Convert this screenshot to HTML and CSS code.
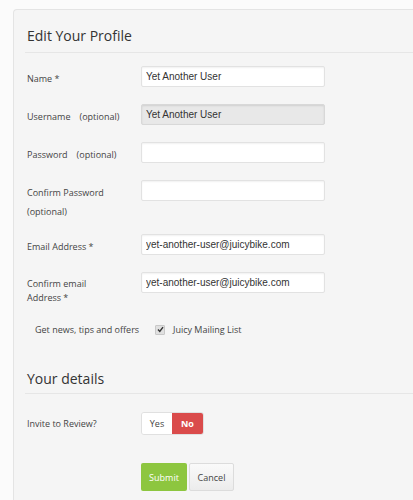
FILE: index.html
```html
<!DOCTYPE html>
<html lang="en">
<head>
    <meta charset="UTF-8">
    <meta name="viewport" content="width=device-width, initial-scale=1.0">
    <title>Edit Your Profile</title>
    <link rel="stylesheet" href="styles.css">
</head>
<body>

<div class="panel">
    <h2 class="section-title">Edit Your Profile</h2>

    <form class="profile-form">
        <div class="row">
            <label class="field-label">Name *</label>
            <input class="field" type="text" value="Yet Another User">
        </div>

        <div class="row">
            <label class="field-label">Username<span class="opt">(optional)</span></label>
            <input class="field readonly" type="text" value="Yet Another User" readonly>
        </div>

        <div class="row">
            <label class="field-label">Password<span class="opt">(optional)</span></label>
            <input class="field" type="password">
        </div>

        <div class="row row-tight">
            <label class="field-label">Confirm Password<br>(optional)</label>
            <input class="field" type="password">
        </div>

        <div class="row">
            <label class="field-label">Email Address *</label>
            <input class="field" type="text" value="yet-another-user@juicybike.com">
        </div>

        <div class="row row-compact">
            <label class="field-label narrow">Confirm email<br>Address *</label>
            <input class="field" type="text" value="yet-another-user@juicybike.com">
        </div>

        <div class="check-row">
            <span class="check-label">Get news, tips and offers</span>
            <span class="checkbox">
                <svg width="7" height="7" viewBox="0 0 7 7"><path d="M1 3.6 L2.8 5.4 L6 1.2" fill="none" stroke="#333" stroke-width="1.4"/></svg>
            </span>
            <span class="check-text">Juicy Mailing List</span>
        </div>

        <h2 class="section-title second">Your details</h2>

        <div class="row invite-row">
            <label class="field-label">Invite to Review?</label>
            <div class="toggle">
                <span class="toggle-yes">Yes</span>
                <span class="toggle-no">No</span>
            </div>
        </div>

        <div class="actions">
            <button type="submit" class="btn-submit">Submit</button>
            <button type="button" class="btn-cancel">Cancel</button>
        </div>
    </form>
</div>

</body>
</html>
```

FILE: styles.css
```css
/* Page */
body {
    margin: 0;
    padding: 9px 0 0 13px;
    background: #fbfbfb;
    font-family: 'Open Sans', sans-serif;
    color: #444;
    overflow: hidden;
}

.panel {
    width: 410px;
    min-height: 520px;
    background: #f5f5f5;
    border: 1px solid #e4e4e4;
    border-right: none;
    border-radius: 4px 0 0 4px;
    padding: 16px 0 0 11px;
    box-sizing: border-box;
}

.section-title {
    margin: 0;
    padding: 0 0 6px 2px;
    font-size: 14px;
    line-height: 20px;
    font-weight: normal;
    color: #333;
    border-bottom: 1px solid #e6e6e6;
}

.section-title.second {
    margin-top: 30px;
    padding-bottom: 4px;
}

.profile-form {
    padding-top: 13px;
}

/* Form rows */
.row {
    display: flex;
    align-items: flex-start;
    margin: 0 0 16px 2px;
}

.row-tight {
    margin-bottom: 13px;
}

.row-compact {
    margin-bottom: 15px;
}

.field-label {
    width: 114px;
    flex-shrink: 0;
    padding-top: 3px;
    font-size: 9px;
    line-height: 19px;
    color: #444;
}

.field-label.narrow {
    padding-top: 5px;
    line-height: 14px;
}

.opt {
    margin-left: 9px;
}

.field {
    width: 184px;
    height: 21px;
    box-sizing: border-box;
    padding: 0 4px;
    border: 1px solid #e2e2e2;
    border-radius: 2px;
    background: #fff;
    box-shadow: inset 0 1px 2px rgba(0, 0, 0, 0.06);
    font-family: 'Liberation Sans', Arial, sans-serif;
    font-size: 10px;
    color: #333;
    outline: none;
}

.field.readonly {
    background: #e8e8e8;
    border-color: #d8d8d8;
    box-shadow: inset 0 1px 2px rgba(0, 0, 0, 0.1);
}

/* Mailing list */
.check-row {
    display: flex;
    align-items: center;
    height: 19px;
    padding-left: 10px;
    font-size: 9px;
    color: #444;
}

.check-label {
    width: 120px;
}

.checkbox {
    width: 8px;
    height: 8px;
    border: 1px solid #c8c8c8;
    border-radius: 1px;
    background: #e0e0e0;
    display: flex;
    align-items: center;
    justify-content: center;
    margin-right: 8px;
}

/* Invite toggle */
.invite-row {
    margin-top: 18px;
    margin-bottom: 28px;
}

.invite-row .field-label {
    padding-top: 2px;
}

.toggle {
    display: flex;
    height: 23px;
    border: 1px solid #e0e0e0;
    border-radius: 3px;
    overflow: hidden;
    box-sizing: border-box;
    font-size: 9px;
    line-height: 21px;
}

.toggle-yes {
    width: 30px;
    text-align: center;
    background: #fff;
    color: #444;
}

.toggle-no {
    width: 31px;
    text-align: center;
    background: #da4b4b;
    color: #fff;
    font-weight: bold;
}

/* Buttons */
.actions {
    display: flex;
    gap: 2px;
    margin-left: 2px;
    padding-left: 114px;
}

.btn-submit,
.btn-cancel {
    height: 28px;
    padding: 0;
    border-radius: 2px;
    font-family: 'Open Sans', sans-serif;
    font-size: 9px;
    cursor: pointer;
}

.btn-submit {
    width: 46px;
    border: none;
    background: #8dc63f;
    color: #fff;
}

.btn-cancel {
    width: 45px;
    border: 1px solid #dcdcdc;
    background: linear-gradient(#fafafa, #ececec);
    color: #444;
}
```
